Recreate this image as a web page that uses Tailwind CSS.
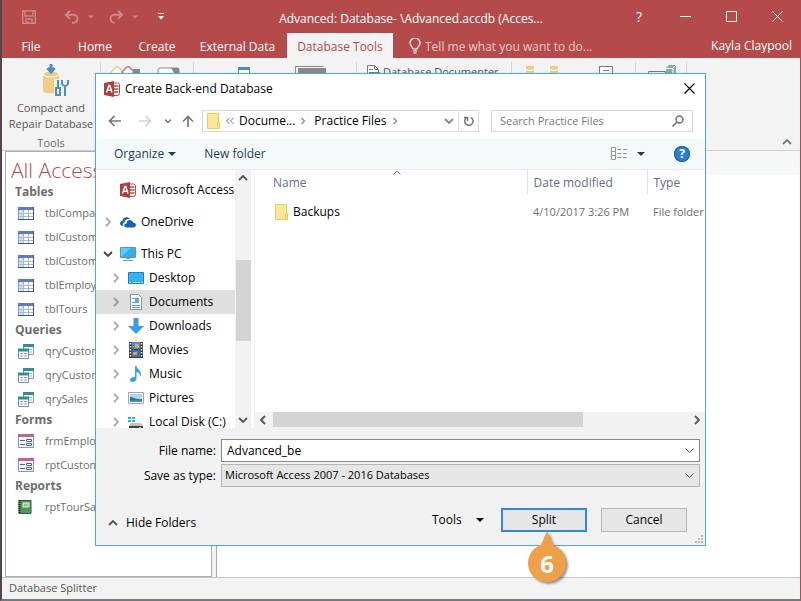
<!DOCTYPE html>
<html lang="en">
<head>
  <meta charset="UTF-8">
  <meta name="viewport" content="width=device-width, initial-scale=1.0">
  <title>Advanced - Access</title>
  <script src="https://cdn.jsdelivr.net/npm/@tailwindcss/browser@4"></script>
</head>
<body class="h-screen overflow-hidden font-['Open_Sans','Noto_Sans',sans-serif] text-xs text-black">

  <!-- shared icons -->
  <svg class="hidden">
    <symbol id="chev-right" viewBox="0 0 8 10"><path d="M2 1l4 4-4 4" fill="none" stroke="currentColor" stroke-width="1.8"/></symbol>
    <symbol id="chev-down" viewBox="0 0 10 8"><path d="M1 2l4 4 4-4" fill="none" stroke="currentColor" stroke-width="1.8"/></symbol>
    <symbol id="chev-up" viewBox="0 0 10 8"><path d="M1 6l4-4 4 4" fill="none" stroke="currentColor" stroke-width="1.8"/></symbol>
    <symbol id="caret" viewBox="0 0 8 4"><path d="M0 0h8L4 4z" fill="currentColor"/></symbol>
    <symbol id="access" viewBox="0 0 16 16">
      <path d="M9 2h4.500q2 0 2 2v8.500q0 2-2 2H9z" fill="#fff" stroke="#b44b4a"/>
      <path d="M10 5h4.500M10 8h4.500M10 11h4.500" stroke="#b44b4a" stroke-width="1.600"/>
      <path d="M0 2L10 0v16L0 14z" fill="#b03c3b"/>
      <path d="M2.500 11.500L4.800 4.500h1L8 11.500M3.400 9.300h3.800" fill="none" stroke="#fff" stroke-width="1.400"/>
    </symbol>
    <symbol id="folder" viewBox="0 0 13 16">
      <path d="M.5.5h11v9h1v6H.5z" fill="#fee79a" stroke="#f0cb50"/>
      <path d="M10.500 9.500v6" stroke="#f0cb50"/>
    </symbol>
    <symbol id="table" viewBox="0 0 16 13">
      <path d="M.5.5h15v12H.5z" fill="#fff" stroke="#7f9ccb"/>
      <path d="M0 0h16v3H0z" fill="#5b7fbd"/>
      <path d="M1 3h4v9H1z" fill="#d5e0f2"/>
      <path d="M1 6.500h14M1 9.500h14M5.500 3v9M10.500 3v9" stroke="#a4b8d8"/>
      <path d="M0 12.500h16M15.500 0v13" stroke="#3d5688"/>
    </symbol>
    <symbol id="query" viewBox="0 0 16 15">
      <path d="M5.500.5h10v10h-10z" fill="#fff" stroke="#7f9cc0"/>
      <path d="M5 0h11v3H5z" fill="#2f8f92"/>
      <path d="M7 5.500h7M7 8h7" stroke="#9fb8d0"/>
      <path d="M.5 5.500h10v9H.5z" fill="#fff" stroke="#6f8cb4"/>
      <path d="M0 4.500h11v3H0z" fill="#2f8f92"/>
      <path d="M2 9.500h3M6 9.500h3M2 12h3M6 12h3" stroke="#7f9cc0"/>
    </symbol>
    <symbol id="form" viewBox="0 0 16 14">
      <path d="M.5.5h15v13H.5z" fill="#f4f6fd" stroke="#8794bd"/>
      <path d="M0 0h16v3H0z" fill="#c8608c"/>
      <path d="M2 6.500h5M2 10.500h5" stroke="#4d5f9f"/>
      <path d="M8.500 5.500h5v2h-5zM8.500 9.500h5v2h-5z" fill="#fff" stroke="#4d5f9f"/>
    </symbol>
  </svg>

  <div class="flex h-full flex-col border-b-2 border-l-2 border-r border-b-[#77777c] border-l-[#55454a] border-r-[#b44b4a] bg-white">

    <!-- title bar -->
    <header class="bg-[#b44b4a] text-white">
      <div class="flex h-[33px] items-center">
        <div class="flex flex-1 items-center pl-5 text-[#cf8686]">
          <button aria-label="Save"><svg class="h-3.5 w-3.5" viewBox="0 0 14 14" fill="none" stroke="currentColor" stroke-width="1.4"><path d="M.7.7h12.600v12.600H.7zM3 1v5h8V1M4 13V9h6v4M6 11v2"/></svg></button>
          <button aria-label="Undo" class="ml-7"><svg class="h-3.5 w-4" viewBox="0 0 16 14" fill="none" stroke="currentColor" stroke-width="2"><path d="M6 .8L2 4.800l4 4M2 4.800h7.500a4 4 0 0 1 0 8H8"/></svg></button>
          <svg class="ml-2 h-1 w-1.5"><use href="#caret"/></svg>
          <button aria-label="Redo" class="ml-3.5"><svg class="h-3.5 w-4" viewBox="0 0 16 14" fill="none" stroke="currentColor" stroke-width="2"><path d="M10 .8l4 4-4 4M14 4.800H6.500a4 4 0 0 0 0 8"/></svg></button>
          <svg class="ml-2 h-1 w-1.5"><use href="#caret"/></svg>
          <button aria-label="Customize" class="ml-5 text-white"><svg class="h-2 w-1.5" viewBox="0 0 6 8"><path d="M0 .5h6" stroke="currentColor"/><path d="M0 3h6L3 6.500z" fill="currentColor"/></svg></button>
        </div>
        <h1 class="pt-1">Advanced: Database- \Advanced.accdb (Acces...</h1>
        <div class="flex flex-1 items-center justify-end">
          <button aria-label="Help" class="flex w-[46px] justify-center text-sm">?</button>
          <button aria-label="Minimize" class="flex w-[46px] justify-center"><svg class="h-[11px] w-[11px]"><path d="M0 5.500h11" stroke="#fff"/></svg></button>
          <button aria-label="Maximize" class="flex w-[46px] justify-center"><svg class="h-[11px] w-[11px]"><path d="M.5.5h10v10H.5z" fill="none" stroke="#fff"/></svg></button>
          <button aria-label="Close" class="flex w-[46px] justify-center"><svg class="h-[11px] w-[11px]"><path d="M.5.5l10 10M10.500.5l-10 10" stroke="#fff"/></svg></button>
        </div>
      </div>
      <nav class="flex h-[25px] items-stretch">
        <button class="w-[62px] pt-0.5 pr-1">File</button>
        <button class="w-[62px] pt-0.5">Home</button>
        <button class="w-[62px] pt-0.5">Create</button>
        <button class="w-[99px] pt-0.5">External Data</button>
        <button class="w-[106px] bg-[#f3f3f3] pt-0.5 text-[#b44b4a]">Database Tools</button>
        <label for="tellme" class="flex items-center pl-4 pr-1" aria-label="Tell me">
          <svg class="h-4 w-3" viewBox="0 0 12 16" fill="none" stroke="#fff" stroke-width="1.2"><path d="M4 11c0-2-3-3-3-6a5 5 0 0 1 10 0c0 3-3 4-3 6zM4 13h4M4.500 15h3"/></svg>
        </label>
        <input id="tellme" class="w-48 bg-transparent pt-0.5 placeholder:text-[#ecc9c9]" placeholder="Tell me what you want to do...">
        <span class="ml-auto self-center pr-2">Kayla Claypool</span>
      </nav>
    </header>

    <!-- ribbon -->
    <section class="flex h-[93px] shrink-0 border-b border-[#cfcfcf] bg-[#f3f3f3] pt-1 text-[11px] text-[#555]">
      <div class="flex h-[88px] w-[99px] shrink-0 flex-col items-center border-r border-[#d4d4d4]">
        <button class="flex flex-col items-center leading-4 whitespace-nowrap">
          <svg class="mb-0.5 ml-2 h-9 w-7" viewBox="0 0 28 36">
            <path d="M2 12v17c0 3 16 3 16 0V12z" fill="#f0cc82"/>
            <ellipse cx="10" cy="12" rx="8" ry="3" fill="#f0cc82" stroke="#fff"/>
            <path d="M10 2v8M6.500 6l3.500 4 3.500-4" fill="none" stroke="#4e8ac4" stroke-width="3"/>
            <path d="M13 17h14v17H13z" fill="#f3f3f3"/>
            <path d="M17 18v8M15 26h4v7h-4zM24 24v10M21 18v4q3 4 6 0v-4" fill="none" stroke="#4e8ac4" stroke-width="2"/>
          </svg>
          <span>Compact and</span><span>Repair Database</span>
        </button>
        <span class="mt-[3px] leading-4 text-[#6a6a6a]">Tools</span>
      </div>
      <div class="flex h-[81px] w-[93px] shrink-0 gap-4 border-r border-[#d4d4d4] pt-1 pl-2">
        <svg class="h-8 w-8" viewBox="0 0 32 32"><path d="M8 0l8 8-8 8-8-8z" fill="#fff" stroke="#f0cc82" stroke-width="1.500"/><path d="M19 0l6 6-6 6-6-6z" fill="#fff" stroke="#d36c8b" stroke-width="1.500"/><path d="M24 3h7v8h-7z" fill="#888"/></svg>
        <svg class="h-8 w-6" viewBox="0 0 24 32"><rect x="1" y="2" width="21" height="16" rx="2" fill="#fff" stroke="#888"/><path d="M14 2h8v5h-5z" fill="#888"/></svg>
      </div>
      <div class="flex h-[81px] w-[163px] shrink-0 gap-11 border-r border-[#d4d4d4] pt-1 pl-11">
        <svg class="h-8 w-3" viewBox="0 0 12 32"><path d="M.5 1.500h11v14H.5z" fill="#fff" stroke="#4e8ac4"/><path d="M0 1h12v3H0z" fill="#4e8ac4"/></svg>
        <svg class="h-8 w-8" viewBox="0 0 32 32"><path d="M1.500 16V.5h28" fill="none" stroke="#888"/><path d="M4 2h28v14H4z" fill="#888"/></svg>
      </div>
      <div class="flex h-[81px] w-[155px] shrink-0 gap-0.5 border-r border-[#d4d4d4] pt-[3px] pl-2">
        <svg class="h-4 w-4" viewBox="0 0 16 16"><path d="M2.500 0.500h7l4 4v11h-11z" fill="#fff" stroke="#777"/><path d="M9.500 0.500v4h4M4 4.500h4M4 7.500h5" fill="none" stroke="#777"/><path d="M9 7h6v6H9z" fill="#4e8ac4"/></svg>
        <span class="whitespace-nowrap">Database Documenter</span>
      </div>
      <div class="flex h-[81px] w-[124px] shrink-0 gap-4 border-r border-[#d4d4d4] pt-1 pl-3.5">
        <svg class="h-6 w-2" viewBox="0 0 8 24"><path d="M0 0h8v20H0z" fill="#f0cc82"/><path d="M0 3.500q4 2 8 0" fill="none" stroke="#fff"/></svg>
        <svg class="h-6 w-2" viewBox="0 0 8 24"><path d="M0 0h8v20H0z" fill="#f0cc82"/><path d="M0 3.500q4 2 8 0" fill="none" stroke="#fff"/></svg>
        <svg class="ml-6 h-6 w-4" viewBox="0 0 16 24"><path d="M1.500.5h13v14h-13z" fill="#fff" stroke="#777"/><path d="M5 4.500h6" stroke="#777"/></svg>
      </div>
      <div class="flex h-[81px] w-[51px] shrink-0 border-r border-[#d4d4d4] pt-[3px] pl-3">
        <svg class="h-6 w-7" viewBox="0 0 28 24"><path d="M.5 6.500h17v10H.5zM3 9h12" fill="none" stroke="#777"/><path d="M18 3l3-3h7v12H18z" fill="#81b2a0"/><path d="M18 3.500h7v9M25 3l3-3" fill="none" stroke="#fff"/></svg>
      </div>
      <button aria-label="Collapse the ribbon" class="ml-auto self-end p-2 pr-2 pb-1 text-[#777]"><svg class="h-2 w-2.5"><use href="#chev-up"/></svg></button>
    </section>

    <!-- workspace -->
    <main class="flex min-h-0 flex-1 bg-white">
      <aside class="ml-[3px] w-[207px] shrink-0 overflow-hidden border border-[#a9adb8] text-[11px] whitespace-nowrap text-[#6d6d6d]">
        <h2 class="h-[31px] pl-[5px] text-[21px] leading-9 font-light text-[#b44b4a]">All Access Objects</h2>
        <h3 class="h-[18px] pl-[9px] text-xs leading-[18px] font-bold">Tables</h3>
        <ul>
          <li class="flex h-6 items-center gap-[11px] pl-3"><svg class="h-[13px] w-4"><use href="#table"/></svg>tblCompany</li>
          <li class="flex h-6 items-center gap-[11px] pl-3"><svg class="h-[13px] w-4"><use href="#table"/></svg>tblCustomers</li>
          <li class="flex h-6 items-center gap-[11px] pl-3"><svg class="h-[13px] w-4"><use href="#table"/></svg>tblCustomerTours</li>
          <li class="flex h-6 items-center gap-[11px] pl-3"><svg class="h-[13px] w-4"><use href="#table"/></svg>tblEmployees</li>
          <li class="flex h-6 items-center gap-[11px] pl-3"><svg class="h-[13px] w-4"><use href="#table"/></svg>tblTours</li>
        </ul>
        <h3 class="h-[18px] pl-[9px] text-xs leading-[18px] font-bold">Queries</h3>
        <ul>
          <li class="flex h-6 items-center gap-[11px] pl-3"><svg class="h-[15px] w-4"><use href="#query"/></svg>qryCustomers</li>
          <li class="flex h-6 items-center gap-[11px] pl-3"><svg class="h-[15px] w-4"><use href="#query"/></svg>qryCustomerTours</li>
          <li class="flex h-6 items-center gap-[11px] pl-3"><svg class="h-[15px] w-4"><use href="#query"/></svg>qrySales</li>
        </ul>
        <h3 class="h-[18px] pl-[9px] text-xs leading-[18px] font-bold">Forms</h3>
        <ul>
          <li class="flex h-6 items-center gap-[11px] pl-3"><svg class="h-3.5 w-4"><use href="#form"/></svg>frmEmployees</li>
          <li class="flex h-6 items-center gap-[11px] pl-3"><svg class="h-3.5 w-4"><use href="#form"/></svg>rptCustomers</li>
        </ul>
        <h3 class="h-[18px] pl-[9px] text-xs leading-[18px] font-bold">Reports</h3>
        <ul>
          <li class="flex h-6 items-center gap-[11px] pl-3">
            <svg class="h-3.5 w-4" viewBox="0 0 16 14"><path d="M1 .5h12v13H1z" fill="#4d9a58" stroke="#2c5f38"/><path d="M5 3h6v4H5z" fill="#8fc898" stroke="#e0f0e0"/><path d="M1.500 0v14" stroke="#223" stroke-width="2" stroke-dasharray="1 1"/></svg>rptTourSales
          </li>
        </ul>
      </aside>
      <div class="w-[5px] shrink-0 border-r border-[#a9adb8] bg-[#f0f2f4]"></div>
      <div class="flex-1"><div class="h-6 bg-[#f6f8f8]"></div></div>
    </main>

    <footer class="flex h-[22px] shrink-0 items-center border-t border-[#c6c6c6] bg-[#f3f3f3] pl-[7px] text-[11px] text-[#555]">Database Splitter</footer>
  </div>

  <!-- save dialog -->
  <div role="dialog" aria-labelledby="dlg-title" class="absolute top-[73px] left-[95px] flex h-[473px] w-[611px] flex-col border border-[#4fa8e4] bg-white shadow-[0_0_1px_rgba(0,0,0,0.2)]">
    <div class="flex h-[29px] items-center pl-2">
      <svg class="h-4 w-4"><use href="#access"/></svg>
      <h2 id="dlg-title" class="ml-[5px]">Create Back-end Database</h2>
      <button aria-label="Close" class="ml-auto pr-2.5"><svg class="h-[11px] w-[11px]"><path d="M.5.5l10 10M10.500.5l-10 10" stroke="#000" stroke-width="1.200"/></svg></button>
    </div>

    <div class="flex h-9 items-center pr-3 pl-3 text-[#777]">
      <button aria-label="Back"><svg class="h-3 w-3.5" viewBox="0 0 14 12" fill="none" stroke="#777" stroke-width="1.700"><path d="M13 6H2M6.500 1L1.500 6l5 5"/></svg></button>
      <button aria-label="Forward" class="ml-4"><svg class="h-3 w-3.5" viewBox="0 0 14 12" fill="none" stroke="#d5d5d5" stroke-width="1.700"><path d="M1 6h11M7.500 1l5 5-5 5"/></svg></button>
      <button aria-label="Recent" class="ml-3"><svg class="h-1.5 w-2"><use href="#chev-down"/></svg></button>
      <button aria-label="Up" class="ml-2.5"><svg class="h-3 w-3" viewBox="0 0 12 12" fill="none" stroke="#777" stroke-width="1.700"><path d="M6 12V2M1 6.500l5-5 5 5"/></svg></button>
      <div class="ml-2 flex h-[22px] w-[277px] items-center border border-[#d9d9d9] text-black">
        <svg class="ml-1 h-4 w-[13px] shrink-0"><use href="#folder"/></svg>
        <svg class="ml-1.5 h-2 w-2 shrink-0" viewBox="0 0 8 8" fill="none" stroke="#777"><path d="M3.500 1l-3 3 3 3M7.500 1l-3 3 3 3"/></svg>
        <button class="ml-[5px]">Docume...</button>
        <svg class="ml-[5px] h-2 w-1.5 text-[#888]"><use href="#chev-right"/></svg>
        <button class="ml-2">Practice Files</button>
        <svg class="ml-[5px] h-2 w-1.5 text-[#888]"><use href="#chev-right"/></svg>
        <button aria-label="Previous locations" class="mr-1 ml-auto text-[#888]"><svg class="h-2 w-2.5"><use href="#chev-down"/></svg></button>
        <button aria-label="Refresh" class="flex h-full w-5 items-center justify-center border-l border-[#d9d9d9]"><svg class="h-3 w-3" viewBox="0 0 12 12" fill="none" stroke="#777" stroke-width="1.500"><path d="M8 2.500a4.200 4.200 0 1 1-4.500.2M1 2.500h3.500v3.500"/></svg></button>
      </div>
      <label class="ml-3 flex h-[22px] flex-1 items-center border border-[#d9d9d9] px-2">
        <input type="search" aria-label="Search Practice Files" placeholder="Search Practice Files" class="min-w-0 flex-1 text-[11px] placeholder:text-[#777]">
        <svg class="h-3 w-3" viewBox="0 0 12 12" fill="none" stroke="#777" stroke-width="1.600"><circle cx="7.500" cy="4.500" r="3.500"/><path d="M5 7L.5 11.500"/></svg>
      </label>
    </div>

    <div class="flex h-[31px] items-center border-b border-[#e6ebec] bg-[#f6f9f9] pr-[15px] pl-[18px] text-[#22395f]">
      <button class="flex items-center gap-1">Organize<svg class="h-1 w-2"><use href="#caret"/></svg></button>
      <button class="ml-7">New folder</button>
      <button aria-label="Change view" class="ml-auto flex items-center gap-2.5">
        <svg class="h-3.5 w-4" viewBox="0 0 16 14" fill="none" stroke="#999"><path d="M.5.5h4v12h-4zM.5 4.500h4M.5 8.500h4M6.500 2.500h4M12 2.500h4M6.500 6.500h4M12 6.500h4M6.500 10.500h4M12 10.500h4"/></svg>
        <svg class="h-1 w-2"><use href="#caret"/></svg>
      </button>
      <button aria-label="Help" class="ml-[29px] flex h-4 w-4 items-center justify-center rounded-full bg-[#2a7fd4] font-bold text-white ring-1 ring-[#1b5fa8] ring-inset">?</button>
    </div>

    <div class="flex h-[258px] overflow-hidden">
      <nav class="w-[139px] shrink-0 overflow-hidden pt-2 whitespace-nowrap">
        <ul>
          <li class="flex h-6 items-center gap-[5px] pl-6"><svg class="h-4 w-4"><use href="#access"/></svg>Microsoft Access</li>
          <li class="mt-2 flex h-6 items-center pl-2">
            <svg class="h-2.5 w-2 text-[#aaa]"><use href="#chev-right"/></svg>
            <svg class="mr-[5px] ml-2 h-3 w-4" viewBox="0 0 16 12"><path d="M3.500 10H2.500C-1 9.500-.5 5 2.500 5 2.500 1 8 0 10 3 6 2.500 4.500 5 4.500 6.500 2 7.500 2.500 9 3.500 10z" fill="#1660b5"/><path d="M6.500 11.500c-3 0-3-4 0-4 0-4.500 6-4.500 6.500-1 4 0 3.500 5 .5 5z" fill="#1660b5"/></svg>OneDrive
          </li>
          <li class="mt-2 flex h-6 items-center pl-[7px]">
            <svg class="h-2 w-2.5 text-[#444]"><use href="#chev-down"/></svg>
            <svg class="mr-[5px] ml-[7px] h-3.5 w-4" viewBox="0 0 16 14"><path d="M.5.5h15v10H.5z" fill="#5ecbf7" stroke="#4a9cc4"/><path d="M1 10L11 1h4v9z" fill="#37aeea"/><path d="M3 13.500h10M6 11.500h4" stroke="#7d9aab"/></svg>This PC
          </li>
          <li class="flex h-6 items-center pl-4">
            <svg class="h-2.5 w-2 text-[#aaa]"><use href="#chev-right"/></svg>
            <svg class="mr-[5px] ml-2 h-3 w-4" viewBox="0 0 16 12"><path d="M.5.5h15v11H.5z" fill="#36b0f2" stroke="#1883c8"/><path d="M1 10.500h2M5 10.500h7M13 10.500h2" stroke="#bfe6fa"/></svg>Desktop
          </li>
          <li class="flex h-6 items-center bg-[#dfdfdf] pl-4">
            <svg class="h-2.5 w-2 text-[#999]"><use href="#chev-right"/></svg>
            <svg class="mr-[5px] ml-2 h-4 w-4" viewBox="0 0 16 16"><path d="M2.500.5h8l3 3v12h-11z" fill="#fff" stroke="#8a9297"/><path d="M4 4.500h3M4 8.500h3M4 11.500h8M4 13.500h8" stroke="#4d9cc4"/><path d="M7 4h4v5H7z" fill="#5aaedb"/></svg>Documents
          </li>
          <li class="flex h-6 items-center pl-4">
            <svg class="h-2.5 w-2 text-[#aaa]"><use href="#chev-right"/></svg>
            <svg class="mr-[5px] ml-2 h-4 w-4" viewBox="0 0 16 16"><path d="M5.500 0h5v8H16l-8 8-8-8h5.500z" fill="#3a9be6"/></svg>Downloads
          </li>
          <li class="flex h-6 items-center pl-4">
            <svg class="h-2.5 w-2 text-[#aaa]"><use href="#chev-right"/></svg>
            <svg class="mr-[5px] ml-2 h-4 w-4" viewBox="0 0 16 16"><path d="M1 0h14v16H1z" fill="#3b3b3b"/><path d="M4 0h8v7H4z" fill="#4f8fd0"/><path d="M4 8h8v7H4z" fill="#3a6fc0"/><path d="M7 2h4v4H7zM5 10h4v3H5z" fill="#e0a83a"/><path d="M2.500 1v14M13.500 1v14" stroke="#fff" stroke-width="1.500" stroke-dasharray="1.500 1.500"/></svg>Movies
          </li>
          <li class="flex h-6 items-center pl-4">
            <svg class="h-2.5 w-2 text-[#aaa]"><use href="#chev-right"/></svg>
            <svg class="mr-[5px] ml-2 h-4 w-4" viewBox="0 0 16 16"><path d="M7 0h1.500c0 3 5 4 4.500 9-.2 1-.7 1.500-1 2 .3-3-1-4.500-3.500-5v7c0 3-6 4-6.500 1.500S4.500 10.500 7 11z" fill="#3aa0e8"/></svg>Music
          </li>
          <li class="flex h-6 items-center pl-4">
            <svg class="h-2.5 w-2 text-[#aaa]"><use href="#chev-right"/></svg>
            <svg class="mr-[5px] ml-2 h-3 w-4" viewBox="0 0 16 12"><path d="M.5.5h15v11H.5z" fill="#fff" stroke="#a5a5a5"/><path d="M2 2h12v8H2z" fill="#a9d8f4"/><path d="M2 5c4 0 5 3 12 2v3H2z" fill="#2d6f96"/><path d="M2 8.500h12V10H2z" fill="#4a97c9"/></svg>Pictures
          </li>
          <li class="flex h-6 items-center pl-4">
            <svg class="h-2.5 w-2 text-[#aaa]"><use href="#chev-right"/></svg>
            <svg class="mr-[5px] ml-2 h-4 w-4" viewBox="0 0 16 16"><path d="M0 3h3v2H0zM4 3h3v2H4zM0 6h3v2H0zM4 6h3v2H4z" fill="#29b1ee"/><path d="M3 9h10l2 3H1z" fill="#c3c3c3"/><path d="M1 12h14v4H1z" fill="#444"/><path d="M11 13h2v1h-2z" fill="#6fe06f"/></svg>Local Disk (C:)
          </li>
        </ul>
      </nav>
      <div class="flex w-4 shrink-0 flex-col items-center bg-[#f2f2f2] text-[#555]">
        <svg class="mt-1 h-2 w-2.5 shrink-0"><use href="#chev-up"/></svg>
        <div class="mt-[78px] h-[81px] w-[15px] shrink-0 bg-[#d4d4d4]"></div>
        <svg class="mt-auto mb-1 h-2 w-2.5 shrink-0"><use href="#chev-down"/></svg>
      </div>
      <div class="ml-[3px] flex min-w-0 flex-1 flex-col overflow-hidden border-l border-[#f0f0f0]">
        <table class="w-full table-fixed text-left whitespace-nowrap text-[#6d6d6d]">
          <thead>
            <tr class="h-[25px] text-[#5f6f8f]">
              <th class="relative w-[272px] border-r border-[#e3e3e3] pl-[18px] font-normal">Name
                <svg class="absolute top-0 left-[138px] h-1.5 w-2" viewBox="0 0 8 6"><path d="M.5 4.500L4 1l3.500 3.500" fill="none" stroke="#777"/></svg>
              </th>
              <th class="w-[120px] border-r border-[#e3e3e3] pl-1.5 font-normal">Date modified</th>
              <th class="pl-1.5 font-normal">Type</th>
            </tr>
          </thead>
          <tbody>
            <tr class="h-[34px] text-[11px]">
              <td class="pl-5"><span class="flex items-center gap-[5px] text-xs text-black"><svg class="h-4 w-[13px]"><use href="#folder"/></svg>Backups</span></td>
              <td class="pl-1.5">4/10/2017 3:26 PM</td>
              <td class="pl-1.5">File folder</td>
            </tr>
          </tbody>
        </table>
        <div class="mt-auto flex h-4 items-center justify-between bg-[#f2f2f2] px-1 pb-px text-[#555]">
          <svg class="h-2.5 w-2 rotate-180"><use href="#chev-right"/></svg>
          <div class="mr-auto ml-[6px] h-[15px] w-[310px] bg-[#d4d4d4]"></div>
          <svg class="h-2.5 w-2"><use href="#chev-right"/></svg>
        </div>
      </div>
    </div>

    <form class="flex flex-1 flex-col bg-[#f2f2f2] pt-[11px]">
      <div class="grid grid-cols-[120px_1fr] items-center gap-x-[5px] gap-y-0.5 pr-[5px]">
        <label for="fname" class="text-right">File name:</label>
        <div class="relative">
          <input id="fname" type="text" value="Advanced_be" class="h-[23px] w-full border border-[#888] bg-white pl-[5px]">
          <svg class="absolute top-2 right-1.5 h-[7px] w-[9px]" viewBox="0 0 9 7"><path d="M.5 1.500l4 4 4-4" fill="none" stroke="#555"/></svg>
        </div>
        <label for="ftype" class="text-right">Save as type:</label>
        <div class="relative">
          <select id="ftype" class="h-[23px] w-full appearance-none border border-[#b5b5b5] bg-[#e6e6e6] pl-[3px] text-[11px]">
            <option>Microsoft Access 2007 - 2016 Databases</option>
          </select>
          <svg class="absolute top-2 right-1.5 h-[7px] w-[9px]" viewBox="0 0 9 7"><path d="M.5 1.500l4 4 4-4" fill="none" stroke="#555"/></svg>
        </div>
      </div>
      <div class="mt-[21px] flex items-center pr-[18px] pl-3">
        <button type="button" class="flex items-center gap-2 pt-1.5"><svg class="h-2 w-2.5 text-[#555]"><use href="#chev-up"/></svg>Hide Folders</button>
        <button type="button" class="mr-[17px] ml-auto flex w-[52px] items-center justify-between">Tools<svg class="h-1 w-2"><use href="#caret"/></svg></button>
        <button type="submit" class="h-6 w-[86px] border-2 border-[#2e8be0] bg-[#e6e6e6]">Split</button>
        <button type="button" class="ml-3.5 h-6 w-[86px] border border-[#b5b5b5] bg-[#e6e6e6]">Cancel</button>
      </div>
      <svg class="mt-auto mr-0.5 mb-0.5 ml-auto h-2 w-2" viewBox="0 0 8 8" fill="#bbb"><path d="M6 0h2v2H6zM3 3h2v2H3zM6 3h2v2H6zM0 6h2v2H0zM3 6h2v2H3zM6 6h2v2H6z"/></svg>
    </form>
  </div>

  <!-- step marker -->
  <div class="absolute top-[531px] left-[528px] flex h-[51px] w-[38px] items-end justify-center">
    <svg class="absolute inset-0 h-full w-full overflow-visible drop-shadow-[2px_2px_1px_rgba(0,0,0,0.4)]" viewBox="0 0 38 51" fill="#f0a048"><circle cx="19" cy="32" r="19"/><path d="M19 0l7 16H12z"/></svg>
    <span class="relative text-2xl leading-9 font-bold text-white">6</span>
  </div>
</body>
</html>
